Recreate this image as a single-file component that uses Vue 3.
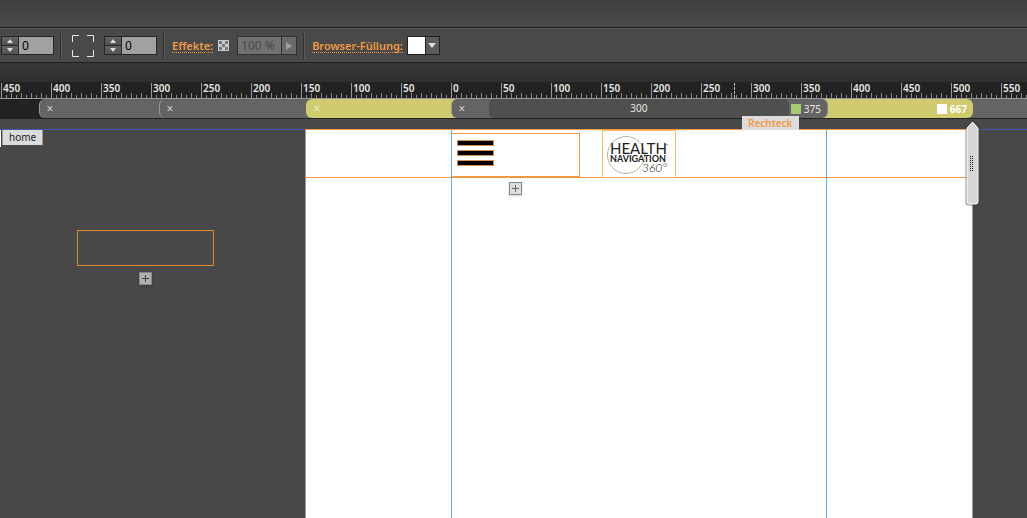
<script setup>
const marks = []
for (let v = -450; v <= 550; v += 50) marks.push(Math.abs(v))
</script>

<template>
  <div class="app">
    <div class="titlebar"></div>
    <div class="toolbar">
      <div class="spinner">
        <div class="steps">
          <button aria-label="Wert erhöhen"><svg width="6" height="4"><path d="M0 4L3 0L6 4Z" fill="#ddd" /></svg></button>
          <button aria-label="Wert verringern"><svg width="6" height="4"><path d="M0 0L3 4L6 0Z" fill="#ddd" /></svg></button>
        </div>
        <input type="text" value="0" aria-label="Strichstärke" />
      </div>
      <span class="divider"></span>
      <button class="corners" aria-label="Eckenradius">
        <svg width="22" height="22" fill="none" stroke="#e8e8e8" stroke-width="1">
          <path d="M.5 7V.5H7M15 .5h6.500V7M21.500 15v6.500H15M7 21.500H.5V15" />
        </svg>
      </button>
      <div class="spinner">
        <div class="steps">
          <button aria-label="Radius erhöhen"><svg width="6" height="4"><path d="M0 4L3 0L6 4Z" fill="#ddd" /></svg></button>
          <button aria-label="Radius verringern"><svg width="6" height="4"><path d="M0 0L3 4L6 0Z" fill="#ddd" /></svg></button>
        </div>
        <input type="text" value="0" aria-label="Radius" />
      </div>
      <span class="divider"></span>
      <a class="link effects" href="#">Effekte:</a>
      <svg class="checker" width="11" height="11" aria-hidden="true">
        <rect width="11" height="11" fill="#c9c9c9" />
        <path d="M1 1h3v3H1zM7 1h3v3H7zM4 4h3v3H4zM1 7h3v3H1zM7 7h3v3H7z" fill="#777" />
      </svg>
      <div class="opacity">
        <input type="text" value="100 %" disabled aria-label="Deckkraft" />
        <button disabled aria-label="Deckkraft wählen"><svg width="6" height="8"><path d="M0 0L6 4L0 8Z" fill="#a0a0a0" /></svg></button>
      </div>
      <span class="divider"></span>
      <a class="link fill" href="#">Browser-Füllung:</a>
      <div class="swatch">
        <button class="color" aria-label="Füllfarbe"></button>
        <button class="drop" aria-label="Füllung wählen"><svg width="8" height="5"><path d="M0 0h8L4 5Z" fill="#ddd" /></svg></button>
      </div>
    </div>
    <div class="band"></div>
    <div class="ruler">
      <span v-for="(m, i) in marks" :key="i" class="mark">{{ m }}</span>
      <i class="cursor"></i>
    </div>
    <div class="breakpoints">
      <div class="bp first"><button aria-label="Entfernen">×</button></div>
      <div class="bp next"><button aria-label="Entfernen">×</button></div>
      <div class="bp olive left"><button aria-label="Entfernen">×</button></div>
      <div class="bp active">
        <button aria-label="Entfernen">×</button>
        <span class="inner">300</span>
        <span class="size"><i class="chip green"></i>375</span>
      </div>
      <div class="bp olive right"><span class="size"><i class="chip"></i>667</span></div>
      <div class="rest"></div>
    </div>
    <main class="work">
      <div class="canvas-edge"></div>
      <div class="tab-edge"></div>
      <span class="home">home</span>
      <div class="page"></div>
      <div class="header-line"></div>
      <div class="guide start"></div>
      <div class="guide end"></div>
      <div class="menu-box"><i></i><i></i><i></i></div>
      <div class="logo">
        <svg width="72" height="46" viewBox="0 0 72 46" role="img" aria-label="Health Navigation 360">
          <circle cx="23" cy="24" r="18.500" fill="none" stroke="#b9b3a0" stroke-width="1" />
          <text x="7" y="23" font-size="15" fill="#222">HEALTH</text>
          <text x="63" y="15" font-size="3" fill="#222">™</text>
          <text x="7" y="31" font-size="9" font-weight="700" fill="#222">NAVIGATION</text>
          <text class="thin" x="39" y="41" font-size="12" fill="#222">360°</text>
        </svg>
      </div>
      <div class="loose-box"></div>
      <button class="plus page-plus" aria-label="Hinzufügen"><svg width="7" height="7"><path d="M3 0h1v7H3zM0 3h7v1H0z" fill="#666" /></svg></button>
      <button class="plus loose-plus" aria-label="Hinzufügen"><svg width="7" height="7"><path d="M3 0h1v7H3zM0 3h7v1H0z" fill="#444" /></svg></button>
      <span class="tag">Rechteck</span>
      <svg class="handle" width="15" height="87" aria-hidden="true">
        <path d="M7.500 2L13 8V82Q13 84 11 84H4Q2 84 2 82V8Z" fill="#d6d6d6" stroke="#333" stroke-opacity=".55" stroke-width="3" />
        <path d="M7.500 2L13 8V82Q13 84 11 84H4Q2 84 2 82V8Z" fill="#d6d6d6" stroke="#fff" stroke-width="1" />
        <path d="M5.500 36v15M7.500 36v15" stroke="#222" stroke-dasharray="1 1" />
      </svg>
    </main>
  </div>
</template>

<style>
html, body, #app { height: 100%; }
body { margin: 0; background: #484848; }
</style>

<style scoped>
.app { height: 100%; display: flex; flex-direction: column; overflow: hidden; font-family: "Noto Sans", sans-serif; font-size: 11px; color: #e6e6e6; }
.app > * { flex: none; box-sizing: border-box; }
button { padding: 0; border: 0; margin: 0; font: inherit; color: inherit; background: none; display: flex; align-items: center; justify-content: center; }
input { box-sizing: border-box; border: 0; margin: 0; min-width: 0; font: inherit; border-radius: 0; }
.titlebar { height: 28px; background: linear-gradient(#3f3f3f, #4b4b4b); border-bottom: 1px solid #1e1e1e; }
.toolbar { height: 35px; display: flex; align-items: center; background: #494949; border-top: 1px solid #5d5d5d; border-bottom: 1px solid #1e1e1e; }
.spinner { display: flex; margin-left: 1px; height: 19px; border: 1px solid #262626; box-sizing: border-box; width: 53px; }
.steps { width: 17px; display: flex; flex-direction: column; border-right: 1px solid #262626; box-sizing: border-box; }
.steps button { flex: 1; background: linear-gradient(#646464, #525252); }
.steps button + button { border-top: 1px solid #262626; }
.spinner input { flex: 1; background: #a1a1a1; color: #000; padding: 0 0 1px 3px; font-size: 12px; }
.divider { width: 1px; height: 26px; background: #303030; border-right: 1px solid #5a5a5a; margin-left: 6px; }
.corners { margin: 0 9px 0 10px; }
.link { color: #f29a42; font-weight: 600; font-size: 11px; line-height: 13px; text-decoration: none; border-bottom: 1px dotted #f29a42; white-space: nowrap; }
.effects { margin: 0 5px 0 7px; }
.opacity { display: flex; margin-left: 8px; width: 60px; height: 19px; box-sizing: border-box; border: 1px solid #303030; }
.opacity input { flex: 1; background: #727272; color: #484848; font-size: 12px; padding: 0 0 1px 3px; }
.opacity button { width: 15px; background: #6a6a6a; border-left: 1px solid #303030; }
.fill { margin: 0 4px 0 7px; }
.swatch { display: flex; width: 33px; height: 19px; box-sizing: border-box; border: 1px solid #202020; }
.color { flex: 1; background: #fff; }
.drop { width: 14px; background: #5c5c5c; border-left: 1px solid #202020; }
.band { height: 19px; background: linear-gradient(#383838, #2f2f2f); }
.ruler { height: 17px; display: flex; position: relative; padding-left: 1px; border-bottom: 1px solid #999; overflow: hidden; background: #222; }
.mark { flex: 0 0 50px; box-sizing: border-box; border-left: 1px solid #999; padding-left: 1px; margin-top: 1px; font-size: 10px; line-height: 10px; font-weight: 600;
  background: repeating-linear-gradient(90deg, transparent 0 4px, #888 4px 5px) left bottom / 49px 3px no-repeat, repeating-linear-gradient(90deg, transparent 0 9px, #888 9px 10px) left bottom / 49px 5px no-repeat; }
.cursor { position: absolute; left: 734px; top: 1px; bottom: 0; border-left: 1px dashed #bbb; }
.breakpoints { height: 20px; display: flex; background: #222; border-bottom: 1px solid #222; padding-left: 39px; isolation: isolate; }
.bp { position: relative; box-sizing: border-box; display: flex; align-items: center; background: #646464; border-left: 1px solid #999; border-radius: 6px 0 0 6px; font-size: 10px; margin-right: -6px; }
.bp > button { width: 20px; font-size: 12px; color: #ccc; }
.first { flex: 0 0 126px; }
.next { flex: 0 0 153px; }
.olive { background: #cfcb6e; border-color: #cfcb6e; color: #fff; }
.left { flex: 0 0 151px; }
.left > button { color: #eeecc4; }
.active { flex: 0 0 377px; border-radius: 6px; border-right: 1px solid #888; z-index: 2; }
.inner { flex: 1; margin-left: 17px; line-height: 19px; background: #4f4f4f; text-align: center; border-radius: 5px; }
.size { display: flex; align-items: center; gap: 3px; padding: 0 6px 0 2px; }
.chip { width: 10px; height: 10px; background: #fff; }
.green { background: #a5ca70; }
.right { flex: 0 0 151px; justify-content: flex-end; border-radius: 0 6px 6px 0; font-weight: 700; z-index: 1; }
.rest { flex: 1; background: #646464; }
.app > .work { flex: 1; position: relative; background: #484848; }
.work > * { position: absolute; box-sizing: border-box; }
.canvas-edge { left: 0; right: 0; top: 10px; height: 1px; background: #3f57b5; }
.tab-edge { left: 0; top: 11px; width: 1px; height: 17px; background: #fff; }
.home { left: 2px; top: 11px; height: 15px; padding: 0 6px; background: #dcdcdc; color: #222; font-size: 10px; line-height: 15px; border-right: 1px solid #999; border-left: 1px solid #999; }
.page { left: 305px; top: 10px; width: 668px; bottom: 0; background: #fff; border: 1px solid #999; border-top-color: #f29a42; border-bottom: 0; }
.header-line { left: 305px; width: 668px; top: 58px; height: 1px; background: #f29a42; }
.guide { top: 11px; bottom: 0; width: 1px; background: #65aef0; }
.start { left: 451px; }
.end { left: 826px; }
.menu-box { left: 452px; top: 14px; width: 128px; height: 44px; border: 1px solid #f29a42; border-left: 0; padding: 6px 5px; display: flex; flex-direction: column; gap: 4px; }
.menu-box i { width: 37px; height: 6px; box-sizing: border-box; background: #000; border: 1px solid #d59350; }
.logo { left: 602px; top: 11px; width: 74px; height: 48px; border: 1px solid #ffb560; }
.logo svg { display: block; font-family: Lato, sans-serif; }
.thin { font-weight: 300; font-style: italic; }
.loose-box { left: 77px; top: 111px; width: 137px; height: 36px; border: 1px solid #e18b2c; }
.plus { width: 13px; height: 13px; border: 1px solid #888; background: #ddd; box-shadow: 0 1px 2px #0003; }
.page-plus { left: 509px; top: 63px; }
.loose-plus { left: 139px; top: 153px; background: #b0b0b0; }
.tag { left: 742px; top: -3px; height: 14px; padding: 0 6px; line-height: 15px; font-size: 10px; font-weight: 600; color: #f29a42; background: #dcdcdc; }
.handle { left: 965px; top: 1px; }
</style>
